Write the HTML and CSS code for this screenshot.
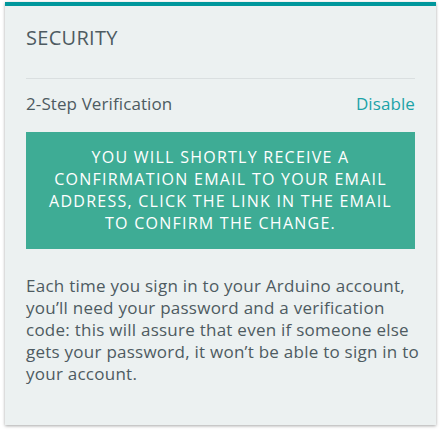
FILE: index.html
```html
<!DOCTYPE html>
<html>
<head>
<meta charset="utf-8">
<link rel="stylesheet" href="styles.css">
</head>
<body>
<section class="card">
  <h2 class="card-title">Security</h2>
  <div class="row">
    <span class="row-label">2-Step Verification</span>
    <a class="row-action" href="#">Disable</a>
  </div>
  <div class="notice">You will shortly receive a confirmation email to your email address, click the link in the email to confirm the change.</div>
  <p class="desc">Each time you sign in to your Arduino account, you’ll need your password and a verification code: this will assure that even if someone else gets your password, it won’t be able to sign in to your account.</p>
</section>
</body>
</html>
```
FILE: styles.css
```css
html, body { margin: 0; background: #ffffff; }
body {
  padding: 2px 6px 10px 5px;
  font-family: "Open Sans", "Liberation Sans", sans-serif;
  color: #4e5b61;
}
.card {
  background: #ecf1f1;
  border-top: 4px solid #00979c;
  box-shadow: 0 1px 3px rgba(0,0,0,0.35);
  padding: 18px 21px 30px 21px;
  height: 423px;
  box-sizing: border-box;
}
.card-title {
  margin: 0;
  font-size: 20px;
  font-weight: 400;
  text-transform: uppercase;
  letter-spacing: 0.3px;
  line-height: 28px;
  padding-bottom: 26px;
  border-bottom: 1px solid #dadfe0;
}
.row {
  display: flex;
  justify-content: space-between;
  align-items: baseline;
  font-size: 17px;
  letter-spacing: 0.1px;
  line-height: 22px;
  padding-top: 14px;
  padding-bottom: 17px;
}
.row-action { color: #1ba3a8; text-decoration: none; }
.notice {
  background: #3eac95;
  color: #ffffff;
  text-transform: uppercase;
  text-align: center;
  font-size: 16px;
  letter-spacing: 1.25px;
  line-height: 22px;
  padding: 14px 16px 15px;
}
.desc {
  margin: 26px -6px 0 0;
  font-size: 17px;
  letter-spacing: 0.25px;
  line-height: 22px;
}
```
